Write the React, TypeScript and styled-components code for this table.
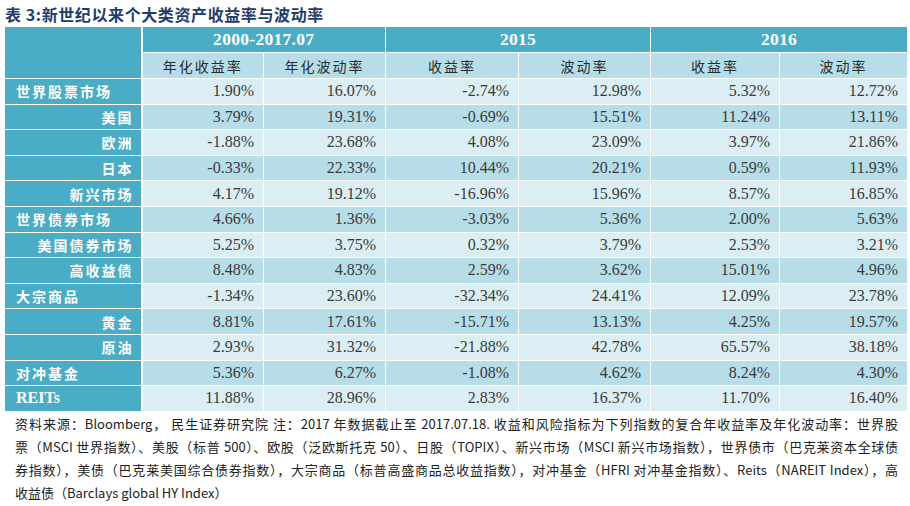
import React from "react";
import styled, { createGlobalStyle } from "styled-components";

const GlobalStyle = createGlobalStyle`
	html, body {
		margin: 0;
		padding: 0;
		background: #ffffff;
	}
	body {
		font-family: "Noto Sans CJK SC", "Liberation Serif", serif;
	}
`;

const HEADER_DARK = "#4bacc6";
const ROW_DARK = "#b7dde8";
const ROW_LIGHT = "#daeef3";

const Page = styled.div`
	width: 910px;
	height: 506px;
	box-sizing: border-box;
	padding: 4px 3px 0 4px;
	overflow: hidden;
`;

const Title = styled.div`
	font-family: "Noto Sans CJK SC", serif;
	font-weight: 700;
	font-size: 16px;
	line-height: 20px;
	letter-spacing: 0.6px;
	color: #1f3c6e;
	padding-left: 1px;
	margin-bottom: 2px;
`;

const Table = styled.table`
	width: 903px;
	table-layout: fixed;
	border-collapse: collapse;
`;

const HeadCell = styled.th<{ $level: 1 | 2 }>`
	height: 25px;
	padding: 0;
	border: 1px solid #ffffff;
	background: ${p => (p.$level === 1 ? HEADER_DARK : ROW_DARK)};
	color: ${p => (p.$level === 1 ? "#ffffff" : "#2b2b2b")};
	text-align: center;
	font-family: ${p =>
		p.$level === 1 ? `"Liberation Serif", serif` : `"Noto Sans CJK SC", sans-serif`};
	font-weight: ${p => (p.$level === 1 ? 700 : 400)};
	font-size: ${p => (p.$level === 1 ? "17.5px" : "14px")};
	letter-spacing: ${p => (p.$level === 1 ? "0.3px" : "2px")};
`;

const CornerCell = styled.th`
	padding: 0;
	border: 1px solid #ffffff;
	border-right-width: 2px;
	background: ${HEADER_DARK};
`;

const LabelCell = styled.td<{ $sub: boolean; $latin?: boolean }>`
	height: 24.6px;
	padding: 0 ${p => (p.$sub ? "7px" : "0")} 0 ${p => (p.$sub ? "0" : "11px")};
	border: 1px solid #ffffff;
	border-right-width: 2px;
	background: ${HEADER_DARK};
	color: #ffffff;
	text-align: ${p => (p.$sub ? "right" : "left")};
	font-family: ${p =>
		p.$latin ? `"Liberation Serif", serif` : `"Noto Sans CJK SC", sans-serif`};
	font-weight: 700;
	font-size: ${p => (p.$latin ? "16px" : "14px")};
	letter-spacing: ${p => (p.$latin ? "0" : "2px")};
	white-space: nowrap;
`;

const ValueCell = styled.td<{ $shade: "light" | "dark" }>`
	padding: 0 9px 0 0;
	border: 1px solid #ffffff;
	background: ${p => (p.$shade === "light" ? ROW_LIGHT : ROW_DARK)};
	color: #3a3a3a;
	text-align: right;
	font-family: "Liberation Serif", serif;
	font-size: 16px;
`;

const Notes = styled.div`
	padding: 0 9px 0 11px;
	font-family: "Noto Sans CJK SC", sans-serif;
	font-size: 13px;
	line-height: 23px;
	color: #222222;
`;

const NoteLine = styled.div<{ $last?: boolean }>`
	white-space: nowrap;
	text-align: ${p => (p.$last ? "left" : "justify")};
	text-align-last: ${p => (p.$last ? "left" : "justify")};
	text-justify: inter-character;
`;

type Row = { label: string; sub: boolean; latin?: boolean; values: string[] };

const rows: Row[] = [
	{ label: "世界股票市场", sub: false, values: ["1.90%", "16.07%", "-2.74%", "12.98%", "5.32%", "12.72%"] },
	{ label: "美国", sub: true, values: ["3.79%", "19.31%", "-0.69%", "15.51%", "11.24%", "13.11%"] },
	{ label: "欧洲", sub: true, values: ["-1.88%", "23.68%", "4.08%", "23.09%", "3.97%", "21.86%"] },
	{ label: "日本", sub: true, values: ["-0.33%", "22.33%", "10.44%", "20.21%", "0.59%", "11.93%"] },
	{ label: "新兴市场", sub: true, values: ["4.17%", "19.12%", "-16.96%", "15.96%", "8.57%", "16.85%"] },
	{ label: "世界债券市场", sub: false, values: ["4.66%", "1.36%", "-3.03%", "5.36%", "2.00%", "5.63%"] },
	{ label: "美国债券市场", sub: true, values: ["5.25%", "3.75%", "0.32%", "3.79%", "2.53%", "3.21%"] },
	{ label: "高收益债", sub: true, values: ["8.48%", "4.83%", "2.59%", "3.62%", "15.01%", "4.96%"] },
	{ label: "大宗商品", sub: false, values: ["-1.34%", "23.60%", "-32.34%", "24.41%", "12.09%", "23.78%"] },
	{ label: "黄金", sub: true, values: ["8.81%", "17.61%", "-15.71%", "13.13%", "4.25%", "19.57%"] },
	{ label: "原油", sub: true, values: ["2.93%", "31.32%", "-21.88%", "42.78%", "65.57%", "38.18%"] },
	{ label: "对冲基金", sub: false, values: ["5.36%", "6.27%", "-1.08%", "4.62%", "8.24%", "4.30%"] },
	{ label: "REITs", sub: false, latin: true, values: ["11.88%", "28.96%", "2.83%", "16.37%", "11.70%", "16.40%"] }
];

const periods = ["2000-2017.07", "2015", "2016"];
const subHeads = ["年化收益率", "年化波动率", "收益率", "波动率", "收益率", "波动率"];
const colWidths = [137, 122, 122, 133, 132, 129, 128];

const notes = [
	"资料来源：Bloomberg， 民生证券研究院 注：2017 年数据截止至 2017.07.18. 收益和风险指标为下列指数的复合年收益率及年化波动率：世界股",
	"票（MSCI 世界指数）、美股（标普 500）、欧股（泛欧斯托克 50）、日股（TOPIX）、新兴市场（MSCI 新兴市场指数），世界债市（巴克莱资本全球债",
	"券指数），美债（巴克莱美国综合债券指数），大宗商品（标普高盛商品总收益指数），对冲基金（HFRI 对冲基金指数）、Reits（NAREIT Index），高",
	"收益债（Barclays global HY Index）"
];

export default function App() {
	return (
		<>
			<GlobalStyle />
			<Page>
				<Title>表 3:新世纪以来个大类资产收益率与波动率</Title>
				<Table>
					<colgroup>
						{colWidths.map((w, i) => (
							<col key={i} style={{ width: w }} />
						))}
					</colgroup>
					<thead>
						<tr>
							<CornerCell rowSpan={2} />
							{periods.map(p => (
								<HeadCell key={p} $level={1} colSpan={2}>
									{p}
								</HeadCell>
							))}
						</tr>
						<tr>
							{subHeads.map((h, i) => (
								<HeadCell key={i} $level={2}>
									{h}
								</HeadCell>
							))}
						</tr>
					</thead>
					<tbody>
						{rows.map((r, i) => (
							<tr key={r.label}>
								<LabelCell $sub={r.sub} $latin={r.latin}>
									{r.label}
								</LabelCell>
								{r.values.map((v, j) => (
									<ValueCell key={j} $shade={i % 2 === 0 ? "light" : "dark"}>
										{v}
									</ValueCell>
								))}
							</tr>
						))}
					</tbody>
				</Table>
				<Notes>
					{notes.map((n, i) => (
						<NoteLine key={i} $last={i === notes.length - 1}>
							{n}
						</NoteLine>
					))}
				</Notes>
			</Page>
		</>
	);
}
